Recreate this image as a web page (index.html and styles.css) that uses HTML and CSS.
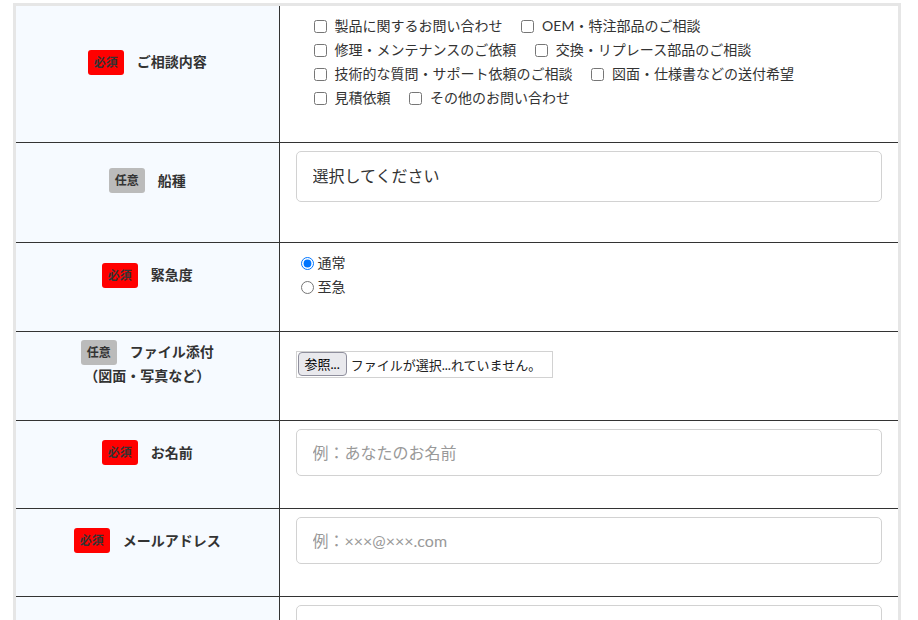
FILE: index.html
```html
<!DOCTYPE html>
<html lang="ja">
<head>
    <meta charset="UTF-8">
    <meta name="viewport" content="width=device-width, initial-scale=1.0">
    <title>お問い合わせ</title>
    <link rel="stylesheet" href="styles.css">
</head>
<body>
    <div class="contact">
        <table class="form-table">
            <colgroup>
                <col class="col-label">
                <col>
            </colgroup>
            <tr>
                <th><span class="badge required">必須</span>ご相談内容</th>
                <td>
                    <div class="check-group">
                        <label class="check"><input type="checkbox" name="type">製品に関するお問い合わせ</label>
                        <label class="check"><input type="checkbox" name="type">OEM・特注部品のご相談</label>
                        <label class="check"><input type="checkbox" name="type">修理・メンテナンスのご依頼</label>
                        <label class="check"><input type="checkbox" name="type">交換・リプレース部品のご相談</label>
                        <label class="check"><input type="checkbox" name="type">技術的な質問・サポート依頼のご相談</label>
                        <label class="check"><input type="checkbox" name="type">図面・仕様書などの送付希望</label>
                        <label class="check"><input type="checkbox" name="type">見積依頼</label>
                        <label class="check"><input type="checkbox" name="type">その他のお問い合わせ</label>
                    </div>
                </td>
            </tr>
            <tr>
                <th><span class="badge optional">任意</span>船種</th>
                <td>
                    <select class="field select">
                        <option>選択してください</option>
                        <option>貨物船</option>
                        <option>タンカー</option>
                        <option>漁船</option>
                        <option>その他</option>
                    </select>
                </td>
            </tr>
            <tr>
                <th><span class="badge required">必須</span>緊急度</th>
                <td>
                    <label class="radio"><input type="radio" name="urgency" checked>通常</label>
                    <label class="radio"><input type="radio" name="urgency">至急</label>
                </td>
            </tr>
            <tr>
                <th><span class="badge optional">任意</span>ファイル添付<br>（図面・写真など）</th>
                <td>
                    <label class="file">
                        <input type="file" class="file-input">
                        <span class="file-btn">参照...</span>
                        <span class="file-name">ファイルが選択...れていません。</span>
                    </label>
                </td>
            </tr>
            <tr>
                <th><span class="badge required">必須</span>お名前</th>
                <td><input type="text" class="field" placeholder="例：あなたのお名前"></td>
            </tr>
            <tr>
                <th><span class="badge required">必須</span>メールアドレス</th>
                <td><input type="email" class="field" placeholder="例：×××@×××.com"></td>
            </tr>
            <tr>
                <th><span class="badge required">必須</span>お問い合わせ内容</th>
                <td><textarea class="field textarea" placeholder="お問い合わせ内容をご記入ください"></textarea></td>
            </tr>
        </table>
    </div>
</body>
</html>
```

FILE: styles.css
```css
*{
    box-sizing: border-box;
}
body{
    margin: 0;
    background: #ffffff;
    color: #333333;
    font-family: "Lato", "Noto Sans CJK JP", sans-serif;
    font-size: 14px;
}
.contact{
    margin: 3px 17px 0 13px;
    border: 3px solid #e6e6e6;
    border-bottom: none;
}
.form-table{
    width: 100%;
    border-collapse: collapse;
    table-layout: fixed;
}
.col-label{
    width: 263px;
}
.form-table th,
.form-table td{
    padding: 8px 16px 32px;
    vertical-align: middle;
    border-bottom: 1px solid #333333;
}
.form-table th{
    background: #f6faff;
    border-right: 1px solid #333333;
    font-size: 14px;
    font-weight: bold;
    line-height: 24px;
    text-align: center;
    color: #333333;
}
.badge{
    display: inline-block;
    margin: -3px 13px -3px 0;
    padding: 4px 6px;
    border-radius: 3px;
    font-size: 12px;
    line-height: 17px;
    color: #333333;
    vertical-align: middle;
    position: relative;
    top: -1px;
}
.badge.required{
    background: #ff0000;
}
.badge.optional{
    background: #bbbbbb;
}

/* checkboxes */
.check-group{
    padding-left: 14px;
    line-height: 24px;
}
.check{
    display: inline-block;
    margin-right: 11px;
    white-space: nowrap;
}
.check input{
    width: 13px;
    height: 13px;
    margin: 0 8px 0 4px;
    vertical-align: -2px;
}

/* radios */
.radio{
    display: block;
    line-height: 24px;
}
.radio input{
    width: 13px;
    height: 13px;
    margin: 0 4px 0 5px;
    vertical-align: -2px;
}

/* text fields */
.field{
    display: block;
    width: 100%;
    height: 47px;
    padding: 0 16px;
    border: 1px solid #d2d2d2;
    border-radius: 5px;
    background: #ffffff;
    font-family: "Lato", "Noto Sans CJK JP", sans-serif;
    font-size: 16px;
    color: #333333;
}
.field::placeholder{
    color: #999999;
}
.select{
    height: 51px;
    margin-bottom: 8px;
    padding-bottom: 3px;
    appearance: none;
    -webkit-appearance: none;
}
.textarea{
    height: 200px;
    padding: 12px 16px;
    resize: vertical;
}

/* file */
.file{
    display: inline-flex;
    align-items: center;
    height: 27px;
    padding: 0 11px 0 1px;
    border: 1px solid #d2d2d2;
    font-size: 13px;
    vertical-align: middle;
}
.file-input{
    display: none;
}
.file-btn{
    height: 24px;
    padding: 0 6px;
    border: 1px solid #8f8f9d;
    border-radius: 4px;
    background: #e9e9ed;
    color: #000000;
    line-height: 22px;
}
.file-name{
    margin-left: 4px;
    color: #222222;
}
```
